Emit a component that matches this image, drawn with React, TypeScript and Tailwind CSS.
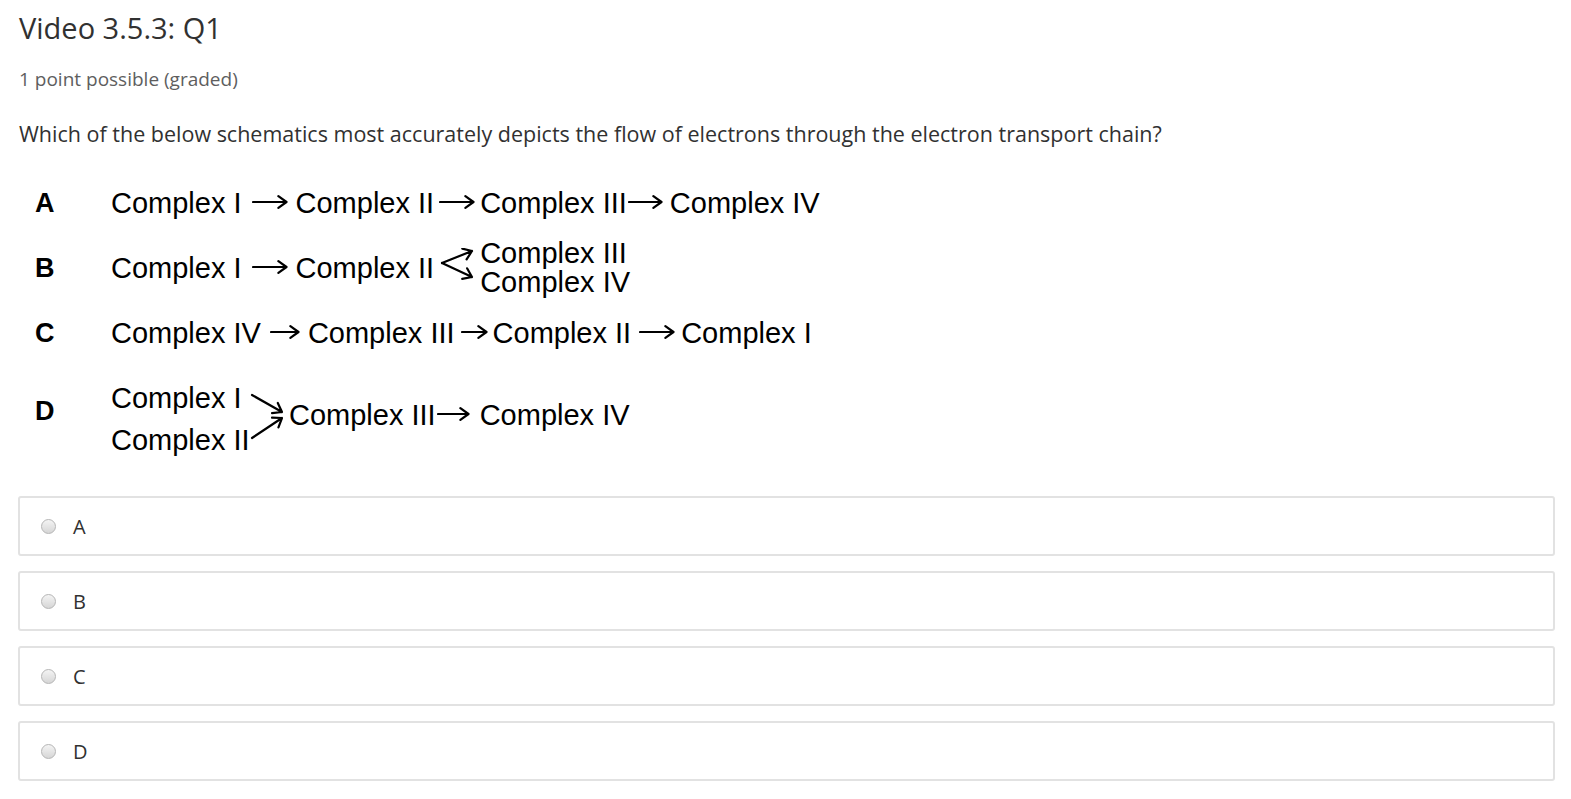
import React from 'react';

const openSans = "font-['Open_Sans',sans-serif]";
const arial = "font-['Liberation_Sans',Arial,sans-serif]";

// line with an open arrow head at (x2, y2)
function ArrowPath({ x1, y1, x2, y2 }: { x1: number; y1: number; x2: number; y2: number }) {
  const a = Math.atan2(y2 - y1, x2 - x1);
  const len = 10;
  const spread = 0.62;
  const h1x = x2 - len * Math.cos(a - spread);
  const h1y = y2 - len * Math.sin(a - spread);
  const h2x = x2 - len * Math.cos(a + spread);
  const h2y = y2 - len * Math.sin(a + spread);
  return (
    <path
      d={`M${x1} ${y1} L${x2} ${y2} M${h1x} ${h1y} L${x2} ${y2} L${h2x} ${h2y}`}
      fill="none"
      stroke="#000"
      strokeWidth={2.2}
      strokeLinecap="round"
      strokeLinejoin="round"
    />
  );
}

function Arrow({ w, className = '' }: { w: number; className?: string }) {
  return (
    <svg width={w} height={20} viewBox={`0 0 ${w} 20`} className={`shrink-0 ${className}`}>
      <ArrowPath x1={1} y1={9} x2={w - 1.5} y2={9} />
    </svg>
  );
}

function Label({ children, className = '' }: { children: React.ReactNode; className?: string }) {
  return <span className={`whitespace-nowrap leading-[32px] ${className}`}>{children}</span>;
}

function Letter({ children, className = '' }: { children: React.ReactNode; className?: string }) {
  return (
    <span className={`w-[93px] shrink-0 pl-[17px] text-[27px] font-bold leading-[32px] ${className}`}>{children}</span>
  );
}

const options = ['A', 'B', 'C', 'D'];

export default function App() {
  return (
    <div className="min-h-screen bg-white pl-[18px] pr-[16px] text-[#313131]">
      {/* Header */}
      <h2 className={`${openSans} pt-[9px] pl-px text-[29px] font-normal leading-[38px] text-[#313131]`}>
        Video 3.5.3: Q1
      </h2>
      <div className={`${openSans} mt-[20px] pl-px text-[19px] leading-[24px] text-[#5e5e5e]`}>
        1 point possible (graded)
      </div>
      <p className={`${openSans} mt-[29px] pl-px text-[21.5px] leading-[28px] text-[#313131]`}>
        Which of the below schematics most accurately depicts the flow of electrons through the electron transport chain?
      </p>

      {/* Schematic */}
      <div className={`${arial} mt-[35px] flex flex-col text-[29px] text-black`}>
        {/* A */}
        <div className="flex h-[40px] items-center">
          <Letter>A</Letter>
          <Label>Complex I</Label>
          <Arrow w={36} className="ml-[10px]" />
          <Label className="ml-[8px]">Complex II</Label>
          <Arrow w={36} className="ml-[5px]" />
          <Label className="ml-[5px]">Complex III</Label>
          <Arrow w={35} className="ml-[1px]" />
          <Label className="ml-[7px]">Complex IV</Label>
        </div>

        {/* B */}
        <div className="mt-[13px] flex h-[64px] items-center">
          <Letter>B</Letter>
          <Label>Complex I</Label>
          <Arrow w={36} className="ml-[10px]" />
          <Label className="ml-[8px]">Complex II</Label>
          <svg width={36} height={40} viewBox="0 0 36 40" className="ml-[5px] shrink-0">
            <ArrowPath x1={3} y1={15} x2={33} y2={3} />
            <ArrowPath x1={3} y1={15} x2={33} y2={29} />
          </svg>
          <div className="ml-[5px] flex flex-col">
            <span className="whitespace-nowrap leading-[29px]">Complex III</span>
            <span className="whitespace-nowrap leading-[29px]">Complex IV</span>
          </div>
        </div>

        {/* C */}
        <div className="mt-[13px] flex h-[40px] items-center">
          <Letter>C</Letter>
          <Label>Complex IV</Label>
          <Arrow w={30} className="ml-[9px]" />
          <Label className="ml-[8px]">Complex III</Label>
          <Arrow w={27} className="ml-[6px]" />
          <Label className="ml-[5px]">Complex II</Label>
          <Arrow w={36} className="ml-[8px]" />
          <Label className="ml-[6px]">Complex I</Label>
        </div>

        {/* D */}
        <div className="mt-[18px] flex h-[90px] items-start">
          <Letter className="mt-[24px]">D</Letter>
          <div className="mt-[6px] flex w-[132px] shrink-0 flex-col">
            <span className="whitespace-nowrap leading-[42px]">Complex I</span>
            <span className="whitespace-nowrap leading-[42px]">Complex II</span>
          </div>
          <svg width={40} height={60} viewBox="0 0 40 60" className="mt-[19px] shrink-0">
            <ArrowPath x1={9} y1={5} x2={39} y2={22} />
            <ArrowPath x1={9} y1={48} x2={39} y2={28} />
          </svg>
          <div className="mt-[28px] flex items-center">
            <Label className="ml-[6px]">Complex III</Label>
            <Arrow w={33} className="ml-[1px]" />
            <Label className="ml-[10px]">Complex IV</Label>
          </div>
        </div>
      </div>

      {/* Choices */}
      <div className={`${openSans} mt-[35px] flex flex-col gap-[15px]`}>
        {options.map((o) => (
          <label
            key={o}
            className="flex h-[60px] items-center rounded-[3px] border-2 border-[#e2e2e2] pl-[21px]"
          >
            <span className="h-[15px] w-[15px] shrink-0 rounded-full border border-[#b5b5b5] bg-linear-to-b from-[#f4f4f4] to-[#d6d6d6]" />
            <span className="ml-[17px] mt-[2px] text-[20px] text-[#313131]">{o}</span>
          </label>
        ))}
      </div>
    </div>
  );
}
